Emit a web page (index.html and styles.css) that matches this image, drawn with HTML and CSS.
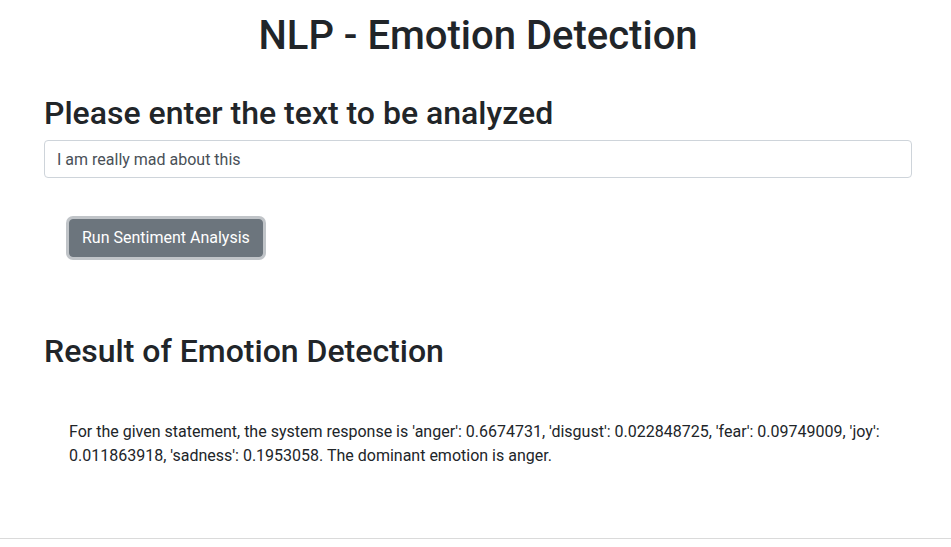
FILE: index.html
```html
<!DOCTYPE html>
<html lang="en">
<head>
<meta charset="utf-8">
<title>NLP - Emotion Detection</title>
<link rel="stylesheet" href="styles.css">
</head>
<body>
<main class="page">
  <h1 class="title">NLP - Emotion Detection</h1>
  <h2 class="section-title">Please enter the text to be analyzed</h2>
  <input class="text-input" type="text" value="I am really mad about this">
  <div class="actions">
    <button class="btn" type="button">Run Sentiment Analysis</button>
  </div>
  <h2 class="section-title result-title">Result of Emotion Detection</h2>
  <p class="result">For the given statement, the system response is 'anger': 0.6674731, 'disgust': 0.022848725, 'fear': 0.09749009, 'joy': 0.011863918, 'sadness': 0.1953058. The dominant emotion is anger.</p>
</main>
<hr class="rule">
</body>
</html>
```

FILE: styles.css
```css
* { box-sizing: border-box; }
html, body { margin: 0; background: #fff; }
body {
  font-family: Roboto, "Liberation Sans", Arial, sans-serif;
  font-size: 16px;
  line-height: 1.5;
  color: #212529;
}
.page {
  padding: 12px 39px 0 44px;
}
.title {
  margin: 0;
  font-size: 40px;
  font-weight: 500;
  line-height: 1.2;
  text-align: center;
}
.section-title {
  margin: 34px 0 8px;
  font-size: 32px;
  font-weight: 500;
  line-height: 1.2;
}
.text-input {
  display: block;
  width: 100%;
  height: 38px;
  padding: 6px 12px;
  font: inherit;
  color: #495057;
  background: #fff;
  border: 1px solid #ced4da;
  border-radius: 4px;
  outline: none;
}
.actions {
  padding: 41px 25px 0;
}
.btn {
  font: inherit;
  line-height: 1.5;
  padding: 6px 12px;
  color: #fff;
  background: #6c757d;
  border: 1px solid #6c757d;
  border-radius: 4px;
  box-shadow: 0 0 0 3px rgba(130, 138, 145, 0.5);
  cursor: pointer;
}
.result-title {
  margin: 75px 0 0;
}
.result {
  margin: 49px 0 0;
  padding-left: 25px;
}
.rule {
  margin: 70px 0 0;
  border: 0;
  border-top: 1px solid #dadada;
}
```
